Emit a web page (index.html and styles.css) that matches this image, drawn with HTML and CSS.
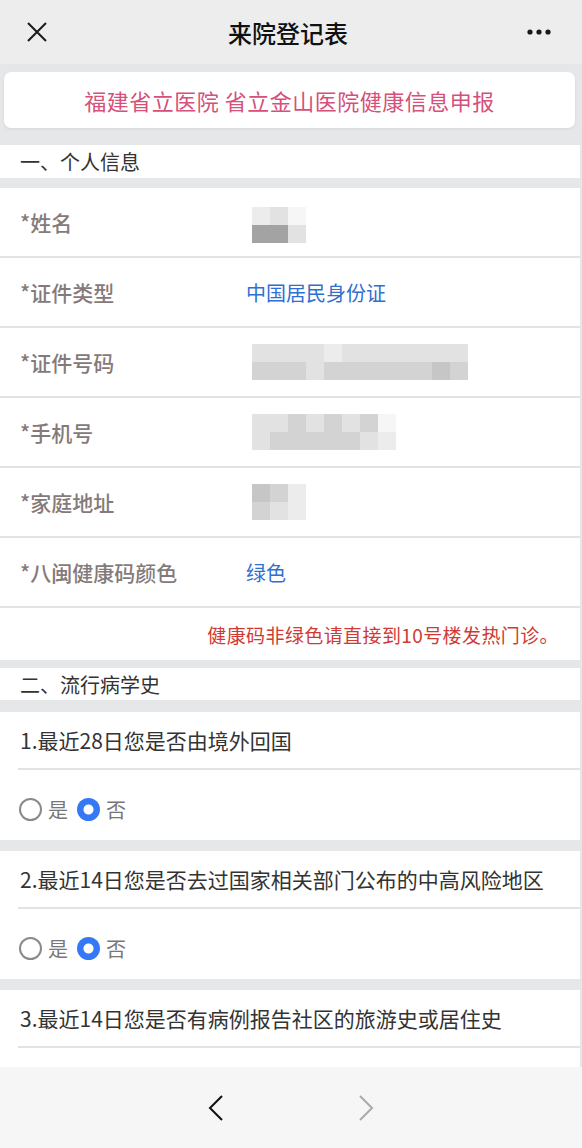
FILE: index.html
```html
<!DOCTYPE html>
<html lang="zh-CN">

<head>
    <meta charset="UTF-8">
    <meta name="viewport" content="width=device-width, initial-scale=1.0">
    <title>来院登记表</title>
    <link rel="stylesheet" href="styles.css">
</head>

<body>
    <div class="app">
        <div class="nav-bar">
            <button class="nav-button" aria-label="关闭">
                <svg viewBox="0 0 24 24" width="24" height="24">
                    <path d="M3 3L21 21M21 3L3 21" stroke="#1a1a1a" stroke-width="2" fill="none"></path>
                </svg>
            </button>
            <div class="nav-title">来院登记表</div>
            <button class="nav-button" aria-label="更多">
                <svg viewBox="0 0 24 8" width="24" height="8">
                    <circle cx="3" cy="4" r="2.6" fill="#1a1a1a"></circle>
                    <circle cx="12" cy="4" r="2.6" fill="#1a1a1a"></circle>
                    <circle cx="21" cy="4" r="2.6" fill="#1a1a1a"></circle>
                </svg>
            </button>
        </div>

        <div class="content">
            <div class="banner">福建省立医院 省立金山医院健康信息申报</div>

            <div class="section-title first">一、个人信息</div>

            <div class="form-group">
                <div class="form-row">
                    <div class="label">*姓名</div>
                    <div class="mosaic cols-3 low">
                        <span class="g1"></span><span class="g2"></span><span class="g0"></span>
                        <span class="g5"></span><span class="g5"></span><span class="g2"></span>
                    </div>
                </div>
                <div class="form-row">
                    <div class="label">*证件类型</div>
                    <div class="value">中国居民身份证</div>
                </div>
                <div class="form-row">
                    <div class="label">*证件号码</div>
                    <div class="mosaic cols-12">
                        <span class="g2"></span><span class="g2"></span><span class="g2"></span><span class="g2"></span><span class="g1"></span><span class="g2"></span><span class="g2"></span><span class="g2"></span><span class="g2"></span><span class="g2"></span><span class="g2"></span><span class="g2"></span>
                        <span class="g3"></span><span class="g3"></span><span class="g3"></span><span class="g2"></span><span class="g3"></span><span class="g3"></span><span class="g3"></span><span class="g3"></span><span class="g3"></span><span class="g3"></span><span class="g4"></span><span class="g3"></span>
                    </div>
                </div>
                <div class="form-row">
                    <div class="label">*手机号</div>
                    <div class="mosaic cols-8">
                        <span class="g2"></span><span class="g2"></span><span class="g3"></span><span class="g2"></span><span class="g3"></span><span class="g2"></span><span class="g3"></span><span class="g0"></span>
                        <span class="g2"></span><span class="g3"></span><span class="g3"></span><span class="g3"></span><span class="g3"></span><span class="g3"></span><span class="g2"></span><span class="g1"></span>
                    </div>
                </div>
                <div class="form-row">
                    <div class="label">*家庭地址</div>
                    <div class="mosaic cols-3">
                        <span class="g4"></span><span class="g3"></span><span class="g1"></span>
                        <span class="g3"></span><span class="g2"></span><span class="g1"></span>
                    </div>
                </div>
                <div class="form-row">
                    <div class="label">*八闽健康码颜色</div>
                    <div class="value">绿色</div>
                </div>
                <div class="notice">健康码非绿色请直接到10号楼发热门诊。</div>
            </div>

            <div class="section-title second">二、流行病学史</div>

            <div class="question">
                <div class="question-text">1.最近28日您是否由境外回国</div>
                <div class="options">
                    <span class="radio"></span><span class="option-text">是</span>
                    <span class="radio checked"></span><span class="option-text">否</span>
                </div>
            </div>

            <div class="question">
                <div class="question-text">2.最近14日您是否去过国家相关部门公布的中高风险地区</div>
                <div class="options">
                    <span class="radio"></span><span class="option-text">是</span>
                    <span class="radio checked"></span><span class="option-text">否</span>
                </div>
            </div>

            <div class="question">
                <div class="question-text">3.最近14日您是否有病例报告社区的旅游史或居住史</div>
                <div class="options"></div>
            </div>
        </div>

        <div class="toolbar">
            <button class="tool-button" aria-label="后退">
                <svg viewBox="0 0 16 28" width="16" height="28">
                    <path d="M14 2L2 14L14 26" stroke="#111" stroke-width="2" fill="none"></path>
                </svg>
            </button>
            <button class="tool-button" aria-label="前进">
                <svg viewBox="0 0 16 28" width="16" height="28">
                    <path d="M2 2L14 14L2 26" stroke="#aaa" stroke-width="2" fill="none"></path>
                </svg>
            </button>
        </div>
    </div>
</body>

</html>
```

FILE: styles.css
```css
body {
    margin: 0;
    padding: 0;
    font-family: "Noto Sans CJK SC", "Noto Sans", sans-serif;
    background: #e6e7e9;
}

.app {
    width: 582px;
    height: 1148px;
    display: flex;
    flex-direction: column;
    overflow: hidden;
}

.nav-bar {
    height: 64px;
    flex-shrink: 0;
    background: #ededed;
    display: flex;
    align-items: center;
    justify-content: space-between;
    padding: 0 30px 0 24px;
}

.nav-button {
    background: none;
    border: none;
    padding: 0;
    width: 26px;
    height: 26px;
    display: flex;
    align-items: center;
    justify-content: center;
}

.nav-title {
    font-size: 24px;
    font-weight: 500;
    color: #111;
}

.content {
    flex: 1;
    overflow: hidden;
    width: 580px;
    padding-top: 8px;
}

.banner {
    margin: 0 5px 0 4px;
    height: 56px;
    background: #fff;
    border-radius: 7px;
    box-shadow: 0 1px 3px rgba(0, 0, 0, 0.08);
    display: flex;
    align-items: center;
    justify-content: center;
    font-size: 22px;
    color: #d5507a;
    letter-spacing: 0.5px;
}

.section-title {
    background: #fff;
    padding-left: 20px;
    font-size: 20px;
    color: #333;
    display: flex;
    align-items: center;
}

.section-title.first {
    margin-top: 17px;
    height: 33px;
}

.section-title.second {
    margin-top: 8px;
    height: 32px;
}

.form-group {
    margin-top: 10px;
    background: #fff;
}

.form-row {
    height: 68px;
    border-bottom: 2px solid #e2e2e2;
    display: flex;
    align-items: center;
}

.label {
    width: 226px;
    padding-left: 20px;
    font-size: 21px;
    font-weight: 500;
    color: #857a7a;
}

.value {
    font-size: 20px;
    color: #2f6fd0;
}

.mosaic {
    display: grid;
    grid-auto-rows: 18px;
    margin-left: 6px;
}

.mosaic.low {
    margin-top: 6px;
}

.mosaic.cols-3 {
    grid-template-columns: repeat(3, 18px);
}

.mosaic.cols-8 {
    grid-template-columns: repeat(8, 18px);
}

.mosaic.cols-12 {
    grid-template-columns: repeat(12, 18px);
}

.g0 { background: #f6f6f6; }
.g1 { background: #ececec; }
.g2 { background: #e2e2e2; }
.g3 { background: #d3d3d3; }
.g4 { background: #c6c6c6; }
.g5 { background: #a3a3a3; }

.notice {
    height: 52px;
    display: flex;
    align-items: center;
    justify-content: flex-end;
    padding-right: 21px;
    font-size: 19px;
    letter-spacing: 0.4px;
    color: #d03a35;
}

.question {
    margin-top: 11px;
    background: #fff;
}

.section-title.second + .question {
    margin-top: 12px;
}

.question-text {
    height: 56px;
    margin-left: 18px;
    padding-left: 2px;
    border-bottom: 2px solid #e2e2e2;
    display: flex;
    align-items: center;
    font-size: 21px;
    color: #333;
}

.options {
    height: 62px;
    padding: 8px 0 0 19px;
    display: flex;
    align-items: center;
}

.radio {
    width: 19px;
    height: 19px;
    border: 2px solid #8a8a8a;
    border-radius: 50%;
    margin-right: 6px;
}

.radio.checked {
    width: 23px;
    height: 23px;
    border: none;
    background: radial-gradient(circle, #fff 4.5px, #3478f6 5.5px);
}

.option-text {
    font-size: 20px;
    color: #777;
    margin-right: 9px;
}

.toolbar {
    height: 81px;
    flex-shrink: 0;
    background: #f6f6f6;
    display: flex;
    justify-content: center;
    align-items: center;
    gap: 134px;
}

.tool-button {
    background: none;
    border: none;
    padding: 0;
    display: flex;
}
```
